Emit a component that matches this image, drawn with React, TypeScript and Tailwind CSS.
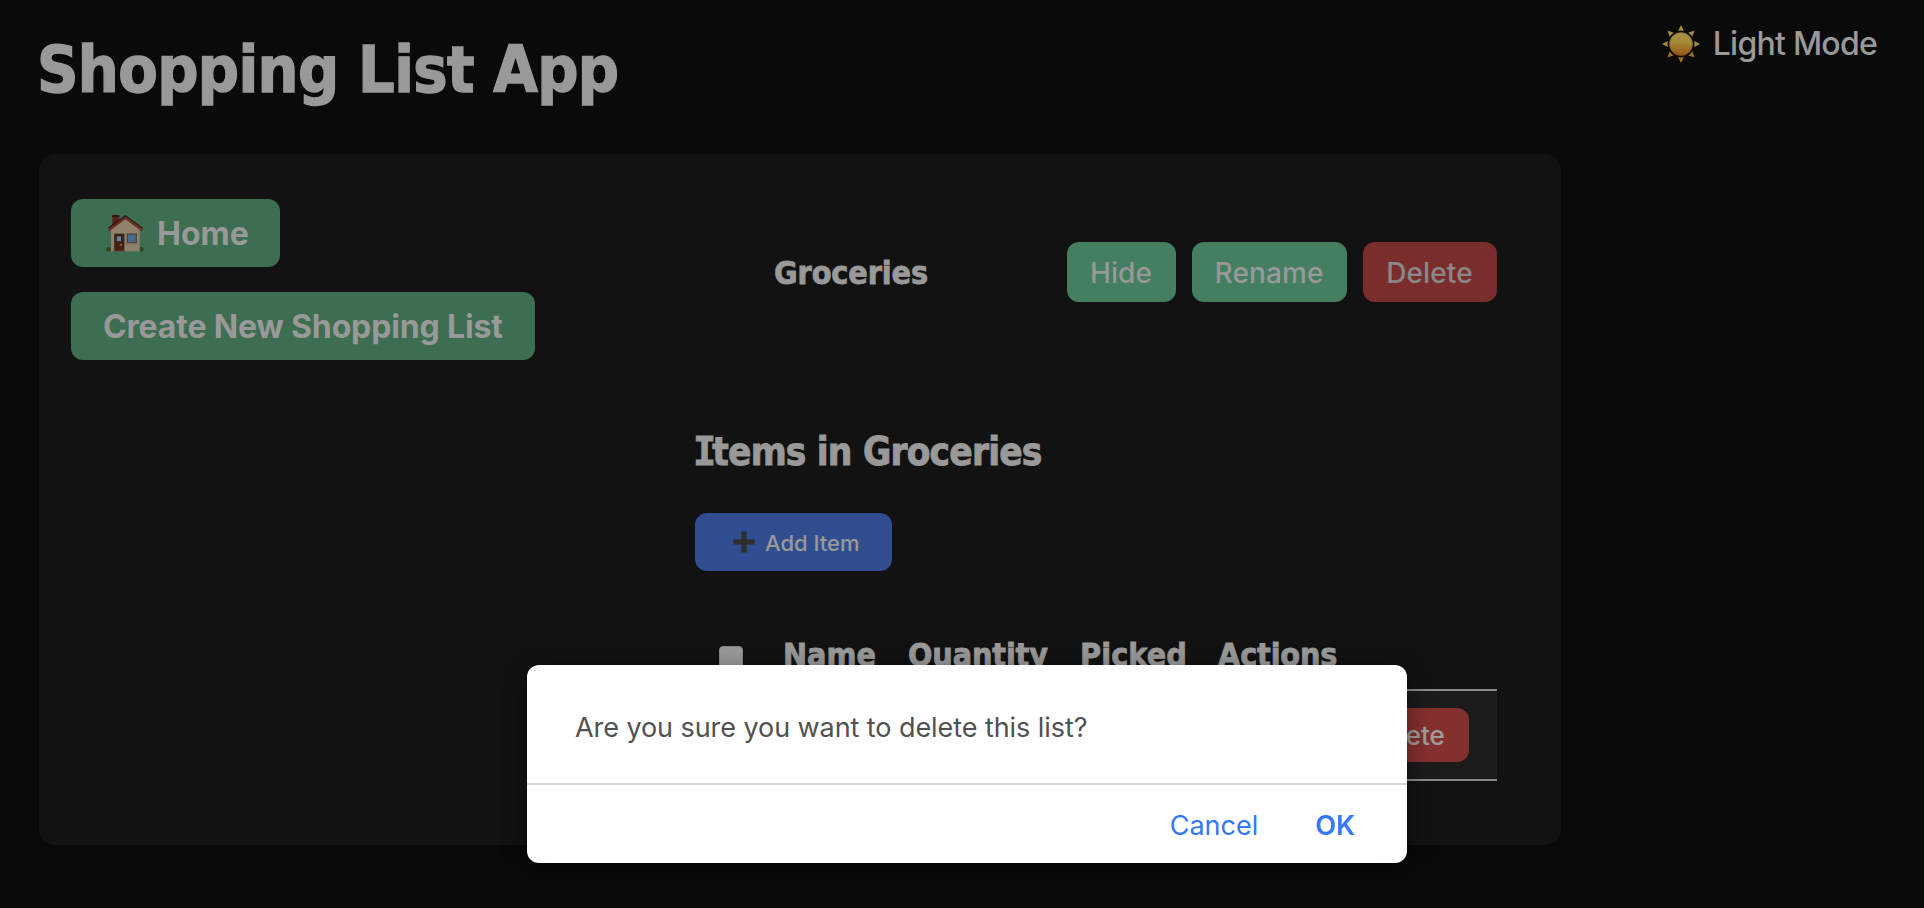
import React from 'react';

const ACTION =
  'flex h-[60px] items-center justify-center rounded-xl pt-px pr-px text-[28px] leading-8 font-[450] tracking-[0.1px]';

function SunIcon() {
  return (
    <svg className="size-[38px]" viewBox="0 0 38 38">
      <defs>
        <linearGradient id="sun" x1="0" y1="0" x2="0" y2="1">
          <stop offset="0" stopColor="#a0914f" />
          <stop offset="0.4" stopColor="#a58c34" />
          <stop offset="1" stopColor="#955619" />
        </linearGradient>
      </defs>
      <circle cx="19" cy="19" r="11.6" fill="url(#sun)" stroke="#7d4f1a" strokeWidth="0.6" />
      {[0, 45, 90, 135, 180, 225, 270, 315].map((a) => (
        <path
          key={a}
          d="M19 0 L21.9 5.9 Q19 5 16.1 5.9 Z"
          fill={a > 90 && a < 270 ? '#9c7229' : '#a39040'}
          transform={`rotate(${a} 19 19)`}
        />
      ))}
    </svg>
  );
}

function HouseIcon() {
  return (
    <svg className="size-[38px]" viewBox="48 40 114 114">
      <circle cx="56" cy="146" r="7" fill="#34441c" />
      <circle cx="154" cy="146" r="7" fill="#34441c" />
      <rect x="67" y="43" width="21" height="34" fill="#5a1f1b" />
      <path d="M67 43h21v6h-21z" fill="#351412" />
      <path d="M63 84 L106 54 L149 84 V152 H63 Z" fill="#8f826d" />
      <path d="M63 100h86M63 116h86M63 132h86" stroke="#85785f" strokeWidth="1.5" />
      <path d="M56 89 L106 52 L157 89" fill="none" stroke="#74271f" strokeWidth="6" />
      <path d="M55 83 L106 45 L158 83" fill="none" stroke="#2b1715" strokeWidth="3.5" />
      <rect x="74" y="100" width="28" height="50" fill="#452417" stroke="#33190f" strokeWidth="2" />
      <rect x="79" y="106" width="15" height="16" fill="#6385a3" stroke="#2d1a12" strokeWidth="2" />
      <circle cx="93" cy="132" r="3" fill="#9a7435" />
      <rect x="112" y="100" width="27" height="26" fill="#446a94" stroke="#54443a" strokeWidth="4" />
      <rect x="69" y="150" width="37" height="4" fill="#5d534c" />
    </svg>
  );
}

function PlusIcon() {
  return (
    <svg className="size-[22px]" viewBox="0 0 22 22">
      <path d="M8.4 0.4h5.2v8h8v5h-8v8.2H8.4v-8.2h-8v-5h8z" fill="#2c2c2c" />
    </svg>
  );
}

function Header() {
  return (
    <header className="flex h-[154px] items-start justify-between pr-[47px] pl-[37px]">
      <h1 className="pt-[26px] font-['DejaVu_Sans_Condensed','DejaVu_Sans',sans-serif] text-[64px] leading-[88px] font-bold tracking-[-0.6px] [-webkit-text-stroke:1.4px_#999]">
        Shopping List App
      </h1>
      <button className="mt-6 flex h-10 items-center gap-[13px]">
        <SunIcon />
        <span className="text-[32px] leading-10 font-[450] tracking-[-0.75px]">Light Mode</span>
      </button>
    </header>
  );
}

function Sidebar() {
  return (
    <nav className="flex w-[624px] flex-col items-start gap-[25px] pt-[45px] text-[32px] leading-10 font-bold">
      <button className="flex h-[68px] w-[209px] items-center gap-[13px] rounded-xl bg-[#3e6e51] pl-[35px]">
        <HouseIcon />
        <span className="pt-[2px]">Home</span>
      </button>
      <button className="h-[68px] w-[464px] rounded-xl bg-[#3e6e51] pt-[2px] pl-8 text-left tracking-[-0.15px]">
        Create New Shopping List
      </button>
    </nav>
  );
}

function ItemTable() {
  return (
    <section className="mt-16">
      <div className="grid h-[54px] grid-cols-[88px_125px_171px_139px_1fr] font-['DejaVu_Sans_Condensed','DejaVu_Sans',sans-serif] text-[32px] leading-10 font-bold [-webkit-text-stroke:0.8px_#999]">
        <span className="mt-[11px] ml-6 size-6 rounded-[4px] border border-[#858585] bg-[#999]" />
        <span>Name</span>
        <span className="tracking-[-0.15px]">Quantity</span>
        <span className="pl-px tracking-[0.1px]">Picked</span>
        <span className="tracking-[-0.15px]">Actions</span>
      </div>
      <div className="flex h-[92px] items-center justify-end border-y-2 border-[#8a8a8a] bg-[#1b1b1b] pr-7">
        <button className="h-[54px] w-[127px] rounded-xl bg-[#84302e] pt-[2px] pr-px text-[26px] leading-8 font-[450] text-[#a09c9c]">
          Delete
        </button>
      </div>
    </section>
  );
}

function ListPanel() {
  return (
    <div className="w-[802px] pt-[88px]">
      <div className="flex h-[60px] items-center gap-4">
        <h3 className="w-[356px] pt-[2px] pl-[79px] font-['DejaVu_Sans_Condensed','DejaVu_Sans',sans-serif] text-[32px] leading-10 font-bold tracking-[-0.1px] [-webkit-text-stroke:0.8px_#999]">
          Groceries
        </h3>
        <button className={`${ACTION} w-[109px] bg-[#437f60]`}>Hide</button>
        <button className={`${ACTION} w-[155px] bg-[#437f60]`}>Rename</button>
        <button className={`${ACTION} w-[134px] bg-[#7b2d2c] text-[#898989]`}>Delete</button>
      </div>
      <h2 className="mt-[127px] h-[46px] font-['DejaVu_Sans_Condensed','DejaVu_Sans',sans-serif] text-[38.4px] leading-[46px] font-bold tracking-[-0.8px] [-webkit-text-stroke:0.9px_#999]">
        <span className="-mr-[3px] -ml-[2px] font-['DejaVu_Sans_Mono',monospace]">I</span>tems in Groceries
      </h2>
      <button className="mt-[38px] flex h-[58px] w-[197px] items-center gap-[10px] rounded-xl bg-[#304d90] pl-[38px] text-[22px] leading-8 font-[450]">
        <PlusIcon />
        <span className="pt-px">Add Item</span>
      </button>
      <ItemTable />
    </div>
  );
}

function ConfirmDialog() {
  return (
    <div
      role="dialog"
      className="absolute top-[665px] left-[527px] h-[198px] w-[880px] rounded-xl bg-white text-[27px] leading-10 shadow-[0_6px_24px_rgba(0,0,0,0.45)]"
    >
      <p className="h-[118px] pt-[43px] pl-12 tracking-[-0.07px] text-[#515151]">
        Are you sure you want to delete this list?
      </p>
      <div className="flex h-20 items-center justify-end gap-[57px] border-t-2 border-[#d6d6d6] pt-1 pr-[52px] text-[#3478f6]">
        <button>Cancel</button>
        <button className="font-semibold">OK</button>
      </div>
    </div>
  );
}

export default function App() {
  return (
    <div className="relative h-[908px] w-full overflow-hidden bg-[#0a0a0a] font-['Inter',sans-serif] text-[#999]">
      <Header />
      <main className="ml-[39px] flex h-[691px] w-[1522px] rounded-2xl bg-[#121212] pl-8 shadow-[0_0_16px_rgba(0,0,0,0.1)]">
        <Sidebar />
        <ListPanel />
      </main>
      <ConfirmDialog />
    </div>
  );
}
